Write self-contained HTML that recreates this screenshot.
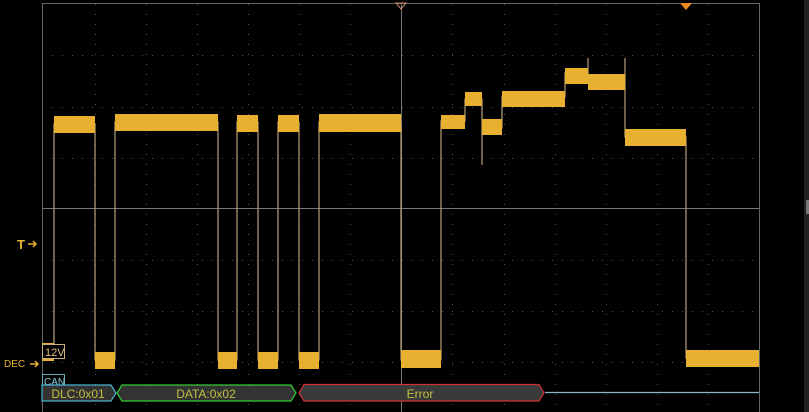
<!DOCTYPE html>
<html><head><style>
html,body{margin:0;padding:0;background:#000;width:809px;height:412px;overflow:hidden;font-family:"Liberation Sans",sans-serif}
</style></head><body>
<svg width="809" height="412" viewBox="0 0 809 412" xmlns="http://www.w3.org/2000/svg">
<rect width="809" height="412" fill="#000"/>
<g stroke="#555" stroke-width="1" stroke-dasharray="1 9">
<line x1="95.5" y1="4" x2="95.5" y2="412"/><line x1="146.5" y1="4" x2="146.5" y2="412"/><line x1="197.5" y1="4" x2="197.5" y2="412"/><line x1="248.5" y1="4" x2="248.5" y2="412"/><line x1="299.5" y1="4" x2="299.5" y2="412"/><line x1="350.5" y1="4" x2="350.5" y2="412"/><line x1="452.5" y1="4" x2="452.5" y2="412"/><line x1="504.5" y1="4" x2="504.5" y2="412"/><line x1="555.5" y1="4" x2="555.5" y2="412"/><line x1="606.5" y1="4" x2="606.5" y2="412"/><line x1="657.5" y1="4" x2="657.5" y2="412"/><line x1="708.5" y1="4" x2="708.5" y2="412"/>
<line x1="42" y1="55.5" x2="759" y2="55.5"/><line x1="42" y1="107.5" x2="759" y2="107.5"/><line x1="42" y1="158.5" x2="759" y2="158.5"/><line x1="42" y1="260.5" x2="759" y2="260.5"/><line x1="42" y1="311.5" x2="759" y2="311.5"/><line x1="42" y1="362.5" x2="759" y2="362.5"/>
</g>
<line x1="42" y1="208.5" x2="759" y2="208.5" stroke="#777"/>
<line x1="401.5" y1="4" x2="401.5" y2="412" stroke="#777"/>
<rect x="42.5" y="3.5" width="717" height="420" fill="none" stroke="#666"/>
<path d="M396 3 L406 3 L401 9 Z" fill="none" stroke="#c86" />
<path d="M680 3 L692 3 L686 10 Z" fill="#f08a20"/>
<rect x="804" y="0" width="5" height="412" fill="#222"/>
<rect x="806" y="200" width="3" height="14" fill="#777"/>
<!-- edges -->
<g stroke="#b8a078" stroke-width="1.2" fill="none">
<path d="M43 355 H54 V124 H95 V360 H115 V122 H218 V360 H237 V122 H258 V360 H278 V122 H299 V360 H319 V122 H401 V360 H441 V121 H465 V99 H482 V128 V165 V128 H502 V97 H565 V73 H588 V58 V80 H625 V58 V137 H686 V358 H759"/>
</g>
<g fill="#e8b030">
<rect x="42" y="343" width="12" height="18"/>
<rect x="54" y="116" width="41" height="17"/>
<rect x="95" y="352" width="20" height="17"/>
<rect x="115" y="114" width="103" height="17"/>
<rect x="218" y="352" width="19" height="17"/>
<rect x="237" y="115" width="21" height="17"/>
<rect x="258" y="352" width="20" height="17"/>
<rect x="278" y="115" width="21" height="17"/>
<rect x="299" y="352" width="20" height="17"/>
<rect x="319" y="114" width="82" height="18"/>
<rect x="401" y="350" width="40" height="18"/>
<rect x="441" y="115" width="24" height="14"/>
<rect x="465" y="92" width="17" height="14"/>
<rect x="482" y="119" width="20" height="16"/>
<rect x="502" y="91" width="63" height="16"/>
<rect x="565" y="68" width="23" height="16"/>
<rect x="588" y="74" width="37" height="16"/>
<rect x="625" y="129" width="61" height="17"/>
<rect x="686" y="350" width="73" height="17"/>
</g>
<!-- labels -->
<text x="17" y="249" fill="#e8b030" font-size="13" font-weight="bold">T</text>
<path d="M28 244 H36 M33 241 L36 244 L33 247" stroke="#e8b030" stroke-width="1.5" fill="none"/>
<text x="4" y="367" fill="#e8b030" font-size="10">DEC</text>
<path d="M30 364 H38 M35 361 L38 364 L35 367" stroke="#e8b030" stroke-width="1.5" fill="none"/>
<rect x="42.5" y="344.5" width="22" height="14" fill="#000" stroke="#c9b080"/>
<text x="45" y="356" fill="#e0c080" font-size="11">12V</text>
<rect x="42.5" y="374.5" width="22" height="12" fill="#000" stroke="#6ab"/>
<text x="44" y="385" fill="#8cd" font-size="10">CAN</text>
<!-- decode bus -->
<line x1="545" y1="392.5" x2="759" y2="392.5" stroke="#8ab8c8" stroke-width="1.3"/>
<path d="M42 385 H111 L116 393 L111 401 H42 Z" fill="#333" stroke="#4ab4d0" stroke-width="1.2"/>
<text x="78" y="398" fill="#c0c040" font-size="12" text-anchor="middle">DLC:0x01</text>
<path d="M122 385 H291 L296 393 L291 401 H122 L117 393 Z" fill="#333" stroke="#3c3" stroke-width="1.2"/>
<text x="206" y="398" fill="#c0c040" font-size="12" text-anchor="middle">DATA:0x02</text>
<path d="M304 384.5 H539 L544 393 L539 401 H304 L299 393 Z" fill="#3a3a3a" stroke="#c33" stroke-width="1.2"/>
<text x="420" y="398" fill="#c0c040" font-size="12" text-anchor="middle">Error</text>
</svg>
</body></html>
